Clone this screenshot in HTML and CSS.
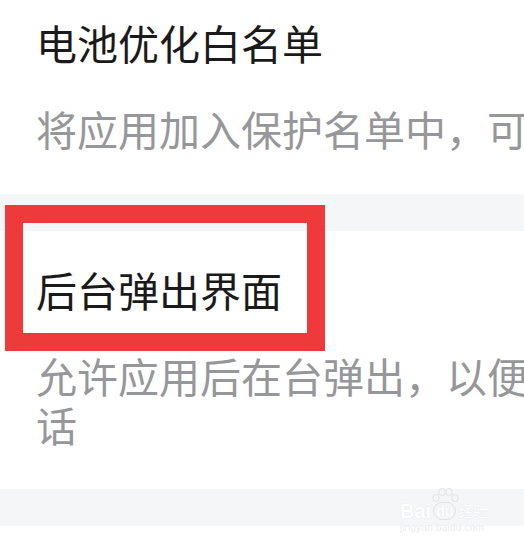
FILE: index.html
```html
<!DOCTYPE html>
<html lang="zh-CN">
<head>
    <meta charset="UTF-8">
    <meta name="viewport" content="width=device-width, initial-scale=1.0">
    <title>应用启动管理</title>
    <link rel="stylesheet" href="styles.css">
</head>
<body>
    <div class="list">
        <div class="item first">
            <div class="title">电池优化白名单</div>
            <div class="desc">
                <span class="line">将应用加入保护名单中，可</span>
            </div>
        </div>
        <div class="divider"></div>
        <div class="item">
            <div class="title">后台弹出界面</div>
            <div class="desc">
                <span class="line">允许应用后在台弹出，以便</span>
                <span class="line">话</span>
            </div>
        </div>
        <div class="divider"></div>
    </div>

    <!-- 标注框 -->
    <div class="mark"></div>

    <!-- 水印 -->
    <div class="watermark">
        <svg class="paw" width="30" height="18" viewBox="0 0 30 18">
            <g fill="none" stroke="#e4e4e4" stroke-width="1.2">
                <ellipse cx="6" cy="11" rx="3" ry="3.5"/>
                <ellipse cx="12" cy="5" rx="3" ry="3.5"/>
                <ellipse cx="19" cy="5" rx="3" ry="3.5"/>
                <ellipse cx="25" cy="11" rx="3" ry="3.5"/>
            </g>
        </svg>
        <div class="wm-main">
            <span>Bai</span><span class="du">du</span><span class="jy">经验</span>
        </div>
        <div class="wm-url">jingyan.baidu.com</div>
    </div>
</body>
</html>
```

FILE: styles.css
```css
body {
    margin: 0;
    padding: 0;
    background-color: #fff;
    font-family: "Noto Sans CJK SC", "Noto Sans", sans-serif;
    overflow: hidden;
    width: 524px;
    height: 545px;
    position: relative;
}
.list {
    display: flex;
    flex-direction: column;
}
.item {
    padding: 34px 0 40px 36px;
    display: flex;
    flex-direction: column;
    gap: 37px;
    overflow: hidden;
}
.item.first {
    padding-top: 18px;
    padding-bottom: 41px;
}
.title {
    font-size: 41px;
    line-height: 49px;
    color: #1a1a1a;
    white-space: nowrap;
}
.desc {
    display: flex;
    flex-direction: column;
}
.desc .line {
    font-size: 41px;
    line-height: 49px;
    color: #96979a;
    white-space: nowrap;
}
.divider {
    height: 37px;
    background-color: #f5f6f8;
}
.mark {
    position: absolute;
    left: 5px;
    top: 205px;
    width: 284px;
    height: 110px;
    border: 18px solid #ef3a3c;
}
.watermark {
    position: absolute;
    left: 400px;
    top: 487px;
    width: 96px;
    font-family: "Liberation Sans", sans-serif;
    color: #fff;
}
.paw {
    position: absolute;
    left: 30px;
    top: 0;
}
.wm-main {
    display: flex;
    align-items: center;
    margin-top: 13px;
    font-size: 20px;
    font-weight: bold;
    line-height: 22px;
    text-shadow: 0 0 1px #d8d8d8;
}
.wm-main .du {
    font-size: 14px;
    border: 1.5px solid #e2e2e2;
    border-radius: 10px;
    padding: 0 2px;
    margin: 0 2px;
    line-height: 16px;
}
.wm-main .jy {
    font-family: "Noto Sans CJK SC", sans-serif;
    font-size: 15px;
    font-weight: normal;
}
.wm-url {
    font-size: 10px;
    line-height: 12px;
    color: #ececec;
    letter-spacing: 0.2px;
}
```
